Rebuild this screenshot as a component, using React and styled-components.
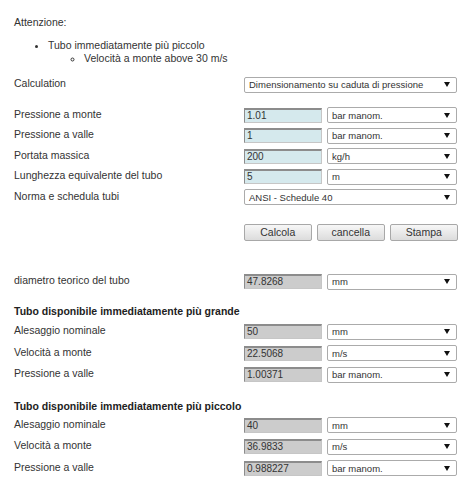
import React from 'react';
import styled, { createGlobalStyle } from 'styled-components';

const GlobalStyle = createGlobalStyle`
  html, body {
    margin: 0;
    padding: 0;
    background: #ffffff;
  }
  body {
    font-family: "Liberation Sans", Arial, sans-serif;
    color: #333333;
  }
`;

const Page = styled.div`
  width: 471px;
  padding: 15px 0 0 14px;
  box-sizing: border-box;
  font-size: 10.5px;
`;

const Note = styled.div`
  line-height: 14px;
`;

const List = styled.ul`
  margin: 10px 0 0 0;
  padding-left: 34px;
  line-height: 13px;
  list-style: disc;

  ul {
    margin: 0;
    padding-left: 36px;
    list-style: circle;
  }
`;

const Group = styled.div`
  margin-top: ${(p) => p.$gap || 0}px;
`;

const Row = styled.div`
  display: grid;
  grid-template-columns: 225px 78px 130px;
  column-gap: 5px;
  align-items: center;
  height: ${(p) => p.$h || 20.5}px;
`;

const Label = styled.div`
  line-height: 13px;
  margin-top: -2px;
`;

const Heading = styled.div`
  font-weight: bold;
  line-height: 14px;
  color: #222222;
  margin-bottom: ${(p) => p.$after || 0}px;
`;

const Field = styled.div`
  height: 15px;
  box-sizing: border-box;
  border-top: 2px solid #8c8c8c;
  border-left: 1px solid #8c8c8c;
  border-right: 1px solid #c6c6c6;
  border-bottom: 1px solid #c6c6c6;
  background: ${(p) => (p.$readonly ? '#cccccc' : '#d5e9ed')};
  padding-left: 2px;
  font-size: 10px;
  line-height: 12px;
  color: #333333;
  white-space: nowrap;
  overflow: hidden;
`;

const Select = styled.div`
  grid-column: ${(p) => (p.$wide ? '2 / 4' : 'auto')};
  height: 16px;
  box-sizing: border-box;
  border: 1px solid #ababab;
  border-radius: 2px;
  background: #ffffff;
  display: flex;
  align-items: center;
  justify-content: space-between;
  padding: 0 6px 0 4px;
  font-size: 9.5px;
  color: #333333;
  white-space: nowrap;
`;

const Arrow = styled.span`
  width: 0;
  height: 0;
  border-left: 3px solid transparent;
  border-right: 3px solid transparent;
  border-top: 5px solid #111111;
`;

const Buttons = styled.div`
  display: flex;
  gap: 5.5px;
  margin-left: 230px;
`;

const Button = styled.button`
  width: 67.5px;
  height: 17px;
  box-sizing: border-box;
  border: 1px solid #a8a8a8;
  border-radius: 2px;
  background: linear-gradient(#f7f7f7, #dcdcdc);
  font-family: "Liberation Sans", Arial, sans-serif;
  font-size: 10.5px;
  color: #333333;
  padding: 0;
  cursor: pointer;
`;

const Dropdown = ({ value, wide }) => (
  <Select $wide={wide}>
    <span>{value}</span>
    <Arrow />
  </Select>
);

const inputs = [
  { label: 'Pressione a monte', value: '1.01', unit: 'bar manom.' },
  { label: 'Pressione a valle', value: '1', unit: 'bar manom.' },
  { label: 'Portata massica', value: '200', unit: 'kg/h' },
  { label: 'Lunghezza equivalente del tubo', value: '5', unit: 'm' },
];

const larger = [
  { label: 'Alesaggio nominale', value: '50', unit: 'mm' },
  { label: 'Velocità a monte', value: '22.5068', unit: 'm/s' },
  { label: 'Pressione a valle', value: '1.00371', unit: 'bar manom.' },
];

const smaller = [
  { label: 'Alesaggio nominale', value: '40', unit: 'mm' },
  { label: 'Velocità a monte', value: '36.9833', unit: 'm/s' },
  { label: 'Pressione a valle', value: '0.988227', unit: 'bar manom.' },
];

const ResultRows = ({ rows }) =>
  rows.map((r, i) => (
    <Row key={i} $h={21.5}>
      <Label>{r.label}</Label>
      <Field $readonly>{r.value}</Field>
      <Dropdown value={r.unit} />
    </Row>
  ));

export default function App() {
  return (
    <>
      <GlobalStyle />
      <Page>
        <Note>Attenzione:</Note>
        <List>
          <li>
            Tubo immediatamente più piccolo
            <ul>
              <li>Velocità a monte above 30 m/s</li>
            </ul>
          </li>
        </List>

        <Group $gap={9}>
          <Row $h={21}>
            <Label>Calculation</Label>
            <Dropdown value="Dimensionamento su caduta di pressione" wide />
          </Row>
        </Group>

        <Group $gap={10}>
          {inputs.map((r, i) => (
            <Row key={i}>
              <Label>{r.label}</Label>
              <Field>{r.value}</Field>
              <Dropdown value={r.unit} />
            </Row>
          ))}
          <Row>
            <Label>Norma e schedula tubi</Label>
            <Dropdown value="ANSI - Schedule 40" wide />
          </Row>
        </Group>

        <Group $gap={16}>
          <Buttons>
            <Button>Calcola</Button>
            <Button>cancella</Button>
            <Button>Stampa</Button>
          </Buttons>
        </Group>

        <Group $gap={31}>
          <Row>
            <Label>diametro teorico del tubo</Label>
            <Field $readonly>47.8268</Field>
            <Dropdown value="mm" />
          </Row>
        </Group>

        <Group $gap={12}>
          <Heading $after={3}>Tubo disponibile immediatamente più grande</Heading>
          <ResultRows rows={larger} />
        </Group>

        <Group $gap={13}>
          <Heading $after={2}>Tubo disponibile immediatamente più piccolo</Heading>
          <ResultRows rows={smaller} />
        </Group>
      </Page>
    </>
  );
}
